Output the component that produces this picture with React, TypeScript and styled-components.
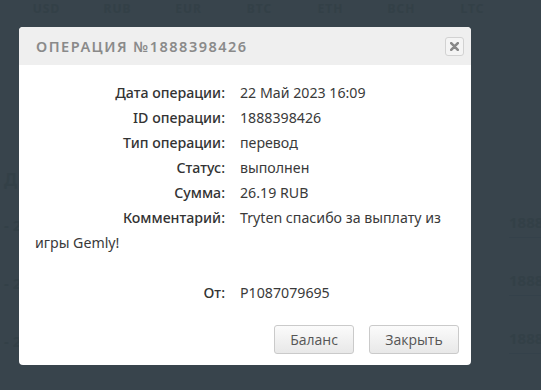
import styled, { createGlobalStyle } from 'styled-components';

const GlobalStyle = createGlobalStyle`
  html, body {
    margin: 0;
    padding: 0;
    background: #38444c;
    overflow: hidden;
  }
  * {
    box-sizing: border-box;
  }
`;

const Page = styled.div`
  width: 541px;
  height: 390px;
  position: relative;
  background: #38444c;
  font-family: 'Noto Sans', sans-serif;
  color: #334047;
`;

const CurrencyBar = styled.div`
  display: grid;
  grid-template-columns: repeat(7, 71px);
  padding: 0 0 0 11px;
  height: 16px;
  align-items: center;
`;

const Currency = styled.span`
  text-align: center;
  font-size: 12px;
  font-weight: 700;
  letter-spacing: 1px;
`;

const SectionTitle = styled.div`
  padding: 152px 0 0 4px;
  font-size: 17px;
  font-weight: 700;
  height: 190px;
`;

const HistoryRow = styled.div`
  display: flex;
  justify-content: space-between;
  align-items: center;
  height: 58px;
  padding: 0 0 0 4px;
  margin-top: -10px;
  margin-bottom: 10px;
`;

const HistoryCell = styled.span`
  font-size: 15px;
  font-weight: 700;
`;

const HistoryId = styled.span`
  font-size: 15px;
  font-weight: 700;
  width: 32px;
  padding-bottom: 5px;
  border-bottom: 1px solid #34414a;
  overflow: hidden;
  white-space: nowrap;
`;

const Modal = styled.div`
  position: absolute;
  left: 19px;
  top: 27px;
  width: 452px;
  height: 338px;
  background: #fff;
  border-radius: 4px;
  display: flex;
  flex-direction: column;
  overflow: hidden;
`;

const ModalHeader = styled.div`
  height: 38px;
  background: #efefef;
  display: flex;
  align-items: center;
  justify-content: space-between;
  padding: 0 7px 0 17px;
`;

const ModalTitle = styled.h3`
  margin: 0;
  font-family: 'Noto Sans', sans-serif;
  font-size: 14.5px;
  font-weight: 600;
  letter-spacing: 1.5px;
  color: #8a8a8a;
  text-transform: uppercase;
`;

const CloseButton = styled.button`
  width: 19px;
  height: 19px;
  padding: 0;
  border: 1px solid #d2d2d2;
  border-radius: 3px;
  background: #f4f4f4;
  display: flex;
  align-items: center;
  justify-content: center;
`;

const ModalBody = styled.div`
  padding: 14.5px 16px 0 16px;
  font-family: 'Noto Sans', sans-serif;
  font-size: 14.2px;
  line-height: 25px;
  color: #3a3a3a;
`;

const InfoRow = styled.div<{ $gap?: boolean }>`
  margin-top: ${(p) => (p.$gap ? '25px' : '0')};
`;

const Label = styled.span`
  display: inline-block;
  width: 190px;
  text-align: right;
  font-weight: 500;
  color: #333;
  margin-right: 15px;
`;

const Value = styled.span`
  color: #3a3a3a;
`;

const Footer = styled.div`
  margin-top: auto;
  display: flex;
  justify-content: flex-end;
  gap: 15px;
  padding: 0 12px 11px 0;
`;

const Button = styled.button<{ $w: number }>`
  width: ${(p) => p.$w}px;
  height: 29px;
  border: 1px solid #cacaca;
  border-radius: 3px;
  background: linear-gradient(#fbfbfb, #e8e8e8);
  font-family: 'Open Sans', 'Liberation Sans', sans-serif;
  font-size: 14px;
  color: #555;
  padding: 0;
`;

const rows: [string, string][] = [
  ['Дата операции:', '22 Май 2023 16:09'],
  ['ID операции:', '1888398426'],
  ['Тип операции:', 'перевод'],
  ['Статус:', 'выполнен'],
  ['Сумма:', '26.19 RUB'],
  ['Комментарий:', 'Tryten спасибо за выплату из игры Gemly!'],
];

const App = () => {
  return (
    <Page>
      <GlobalStyle />
      <CurrencyBar>
        {['USD', 'RUB', 'EUR', 'BTC', 'ETH', 'BCH', 'LTC'].map((c) => (
          <Currency key={c}>{c}</Currency>
        ))}
      </CurrencyBar>
      <SectionTitle>Д</SectionTitle>
      {[0, 1, 2].map((i) => (
        <HistoryRow key={i}>
          <HistoryCell>- 2</HistoryCell>
          <HistoryId>1888</HistoryId>
        </HistoryRow>
      ))}
      <Modal>
        <ModalHeader>
          <ModalTitle>Операция №1888398426</ModalTitle>
          <CloseButton>
            <svg width="9" height="9" viewBox="0 0 9 9">
              <path d="M1.2 1.2L7.8 7.8M7.8 1.2L1.2 7.8" stroke="#888" strokeWidth="2.6" strokeLinecap="round" />
            </svg>
          </CloseButton>
        </ModalHeader>
        <ModalBody>
          {rows.map(([l, v]) => (
            <InfoRow key={l}>
              <Label>{l}</Label>
              <Value>{v}</Value>
            </InfoRow>
          ))}
          <InfoRow $gap>
            <Label>От:</Label>
            <Value>P1087079695</Value>
          </InfoRow>
        </ModalBody>
        <Footer>
          <Button $w={80}>Баланс</Button>
          <Button $w={90}>Закрыть</Button>
        </Footer>
      </Modal>
    </Page>
  );
};

export default App;
